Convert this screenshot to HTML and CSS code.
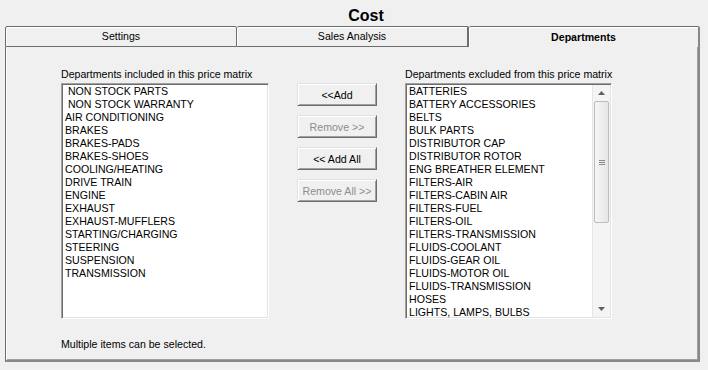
FILE: index.html
```html
<!DOCTYPE html>
<html lang="en">
<head>
    <meta charset="UTF-8">
    <title>Cost</title>
    <link rel="stylesheet" href="styles.css">
</head>
<body>
    <h1 class="title">Cost</h1>

    <div class="tabs">
        <div class="tab">Settings</div>
        <div class="tab">Sales Analysis</div>
        <div class="tab active">Departments</div>
    </div>

    <div class="panel">
        <div class="lists">
            <div class="column">
                <div class="label">Departments included in this price matrix</div>
                <div class="listbox">
                    <ul class="items">
                        <li> NON STOCK PARTS</li>
                        <li> NON STOCK WARRANTY</li>
                        <li>AIR CONDITIONING</li>
                        <li>BRAKES</li>
                        <li>BRAKES-PADS</li>
                        <li>BRAKES-SHOES</li>
                        <li>COOLING/HEATING</li>
                        <li>DRIVE TRAIN</li>
                        <li>ENGINE</li>
                        <li>EXHAUST</li>
                        <li>EXHAUST-MUFFLERS</li>
                        <li>STARTING/CHARGING</li>
                        <li>STEERING</li>
                        <li>SUSPENSION</li>
                        <li>TRANSMISSION</li>
                    </ul>
                </div>
            </div>

            <div class="buttons">
                <button class="button">&lt;&lt;Add</button>
                <button class="button" disabled>Remove &gt;&gt;</button>
                <button class="button">&lt;&lt; Add All</button>
                <button class="button" disabled>Remove All &gt;&gt;</button>
            </div>

            <div class="column right">
                <div class="label">Departments excluded from this price matrix</div>
                <div class="listbox">
                    <ul class="items">
                        <li>BATTERIES</li>
                        <li>BATTERY ACCESSORIES</li>
                        <li>BELTS</li>
                        <li>BULK PARTS</li>
                        <li>DISTRIBUTOR CAP</li>
                        <li>DISTRIBUTOR ROTOR</li>
                        <li>ENG BREATHER ELEMENT</li>
                        <li>FILTERS-AIR</li>
                        <li>FILTERS-CABIN AIR</li>
                        <li>FILTERS-FUEL</li>
                        <li>FILTERS-OIL</li>
                        <li>FILTERS-TRANSMISSION</li>
                        <li>FLUIDS-COOLANT</li>
                        <li>FLUIDS-GEAR OIL</li>
                        <li>FLUIDS-MOTOR OIL</li>
                        <li>FLUIDS-TRANSMISSION</li>
                        <li>HOSES</li>
                        <li>LIGHTS, LAMPS, BULBS</li>
                    </ul>
                    <div class="scrollbar">
                        <div class="arrow">
                            <svg width="7" height="4" viewBox="0 0 7 4"><polygon points="3.5,0 7,4 0,4" fill="#606060"/></svg>
                        </div>
                        <div class="track">
                            <div class="thumb">
                                <svg width="6" height="5" viewBox="0 0 6 5">
                                    <rect x="0" y="0" width="6" height="1" fill="#8a8a8a"/>
                                    <rect x="0" y="2" width="6" height="1" fill="#8a8a8a"/>
                                    <rect x="0" y="4" width="6" height="1" fill="#8a8a8a"/>
                                </svg>
                            </div>
                        </div>
                        <div class="arrow">
                            <svg width="7" height="4" viewBox="0 0 7 4"><polygon points="0,0 7,0 3.5,4" fill="#606060"/></svg>
                        </div>
                    </div>
                </div>
            </div>
        </div>

        <p class="hint">Multiple items can be selected.</p>
    </div>
</body>
</html>
```

FILE: styles.css
```css
body {
    margin: 0;
    background-color: #f0f0f0;
    font-family: "Liberation Sans", Arial, sans-serif;
    font-size: 10.6px;
    color: #000;
}
.title {
    margin: 0;
    height: 26px;
    box-sizing: border-box;
    padding: 6px 0 0 24px;
    font-size: 16px;
    line-height: 20px;
    font-weight: bold;
    text-align: center;
}

/* tab strip */
.tabs {
    display: flex;
    margin-left: 5px;
    width: 695px;
}
.tab {
    box-sizing: border-box;
    width: 232px;
    height: 21px;
    line-height: 19px;
    text-align: center;
    border-top: 1px solid #6d6d6d;
    border-right: 1px solid #6d6d6d;
    border-bottom: 1px solid #6d6d6d;
    border-radius: 2px 2px 0 0;
    box-shadow: inset 1px 1px #fff;
}
.tab:first-child {
    border-left: 1px solid #6d6d6d;
}
.tab:nth-child(2) {
    border-right-width: 2px;
}
.tab.active {
    width: 231px;
    font-weight: bold;
    border-bottom: none;
    border-right: 2px solid #888;
    line-height: 21px;
}

/* panel */
.panel {
    box-sizing: border-box;
    width: 695px;
    height: 315px;
    margin-left: 5px;
    padding: 21px 0 0 55px;
    border-left: 1px solid #6d6d6d;
    border-right: 2px solid #888;
    border-bottom: 2px solid #888;
    box-shadow: inset 1px 0 #fff, inset -1px -1px #a0a0a0;
}
.lists {
    display: flex;
    align-items: flex-start;
    gap: 28px;
}
.column {
    width: 208px;
}
.column.right {
    width: 207px;
}
.label {
    height: 13px;
    line-height: 13px;
    margin-bottom: 2px;
    white-space: nowrap;
}
.listbox {
    box-sizing: border-box;
    display: flex;
    height: 236px;
    background: #fff;
    border: 1px solid;
    border-color: #a0a0a0 #fff #fff #a0a0a0;
    box-shadow: inset 1px 1px #6d6d6d, inset -1px -1px #e3e3e3;
}
.items {
    flex: 1;
    list-style: none;
    margin: 0;
    padding: 1px 2px 0 3px;
    overflow: hidden;
}
.items li {
    height: 13px;
    line-height: 13px;
    white-space: pre;
}

/* scrollbar of the right list */
.scrollbar {
    display: flex;
    flex-direction: column;
    width: 17px;
    margin: 1px 1px 1px 0;
    background: #f4f4f4;
    border-left: 1px solid #e6e6e6;
}
.arrow {
    height: 16px;
    display: flex;
    align-items: center;
    justify-content: center;
}
.track {
    flex: 1;
}
.thumb {
    box-sizing: border-box;
    height: 122px;
    margin: 0 1px;
    border: 1px solid #bcbcbc;
    border-radius: 2px;
    background: linear-gradient(to right, #f6f6f6, #e6e6e6);
    display: flex;
    align-items: center;
    justify-content: center;
}

/* buttons between the lists */
.buttons {
    display: flex;
    flex-direction: column;
    gap: 9px;
    margin-top: 15px;
    width: 80px;
}
.button {
    box-sizing: border-box;
    height: 23px;
    padding: 0;
    font-family: "Liberation Sans", Arial, sans-serif;
    font-size: 10.6px;
    color: #000;
    background-color: #f0f0f0;
    border: 1px solid;
    border-color: #e3e3e3 #6d6d6d #6d6d6d #e3e3e3;
    box-shadow: inset 1px 1px #fff, inset -1px -1px #a0a0a0;
}
.button:disabled {
    color: #8d8d8d;
}
.hint {
    margin: 19px 0 0;
    line-height: 13px;
}
```
